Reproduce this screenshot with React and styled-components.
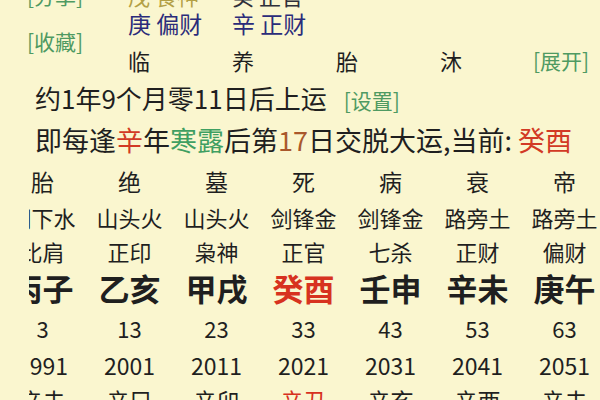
import React from 'react';
import styled, { createGlobalStyle } from 'styled-components';

const GlobalStyle = createGlobalStyle`
  html, body {
    margin: 0;
    padding: 0;
    background: #faf6cf;
  }
  body {
    font-family: "Noto Sans CJK SC", "Noto Sans", sans-serif;
    color: #1f1f1f;
  }
`;

const Page = styled.div`
  width: 600px;
  height: 400px;
  overflow: hidden;
  background: #faf6cf;
`;

const Header = styled.div`
  display: grid;
  grid-template-columns: 101px 104px 104px 104px 93px 1fr;
  grid-template-rows: 28px 28px 46px;
  margin-top: -19px;
  padding-left: 27px;
  align-items: center;
`;

const Cell = styled.div`
  font-size: ${({ size }) => size || 22}px;
  line-height: 1;
  white-space: nowrap;
  color: ${({ color }) => color || '#1f1f1f'};
  grid-column: ${({ col }) => col};
  grid-row: ${({ row }) => row};
`;

const Link = styled(Cell)`
  color: #4f9a62;
  font-size: 21px;
`;

const SideLink = styled(Link)`
  align-self: start;
  margin-top: 22px;
`;

const Line = styled.div`
  height: 30px;
  margin-top: ${({ top }) => top || 0}px;
  padding-left: 35px;
  display: flex;
  align-items: baseline;
  font-size: ${({ size }) => size || 26}px;
  line-height: 30px;
  white-space: nowrap;
`;

const Inline = styled.span`
  color: ${({ color }) => color};
`;

const Setting = styled.span`
  color: #4f9a62;
  font-size: 21px;
  margin-left: 17px;
`;

const TableClip = styled.div`
  margin-top: 9px;
  margin-left: 29px;
  overflow: hidden;
`;

const Table = styled.div`
  margin-left: -30px;
  width: 609px;
`;

const Row = styled.div`
  display: grid;
  grid-template-columns: repeat(7, 87px);
  height: ${({ h }) => h}px;
  align-items: center;
  justify-items: center;
  font-size: ${({ size }) => size}px;
  font-weight: ${({ bold }) => (bold ? 700 : 400)};
  line-height: 1;
  white-space: nowrap;
`;

const Item = styled.span`
  color: ${({ red }) => (red ? '#d7321f' : '#1f1f1f')};
`;

const RED = '#d23a25';
const GREEN = '#3f9f62';
const BROWN = '#a9582c';

const rows = [
  { h: 34, size: 23, items: ['胎', '绝', '墓', '死', '病', '衰', '帝'] },
  { h: 37, size: 22, items: ['涧下水', '山头火', '山头火', '剑锋金', '剑锋金', '路旁土', '路旁土'] },
  { h: 31, size: 22, items: ['比肩', '正印', '枭神', '正官', '七杀', '正财', '偏财'] },
  { h: 42, size: 31, bold: true, items: ['丙子', '乙亥', '甲戌', '癸酉', '壬申', '辛未', '庚午'] },
  { h: 40, size: 22, items: ['3', '13', '23', '33', '43', '53', '63'] },
  { h: 34, size: 23, items: ['1991', '2001', '2011', '2021', '2031', '2041', '2051'] },
  { h: 36, size: 23, items: ['辛未', '辛巳', '辛卯', '辛丑', '辛亥', '辛酉', '辛未'] },
];

const App = () => (
  <>
    <GlobalStyle />
    <Page>
      <Header>
        <Link col={1} row={1}>[分享]</Link>
        <Cell col={2} row={1} color="#b3a046">戊 食神</Cell>
        <Cell col={3} row={1} color="#2f2f3a">癸 正官</Cell>

        <Cell col={2} row={2} size={23} color="#2b2c7a">庚 偏财</Cell>
        <Cell col={3} row={2} size={23} color="#2b2c7a">辛 正财</Cell>
        <SideLink col={1} row="2 / span 2">[收藏]</SideLink>

        <Cell col={2} row={3}>临</Cell>
        <Cell col={3} row={3}>养</Cell>
        <Cell col={4} row={3}>胎</Cell>
        <Cell col={5} row={3}>沐</Cell>
        <Link col={6} row={3}>[展开]</Link>
      </Header>

      <Line>
        约1年9个月零11日后上运
        <Setting>[设置]</Setting>
      </Line>
      <Line top={12} size={27}>
        即每逢<Inline color={RED}>辛</Inline>年<Inline color={GREEN}>寒露</Inline>后第
        <Inline color={BROWN}>17</Inline>日交脱大运,当前:&nbsp;<Inline color={RED}>癸酉</Inline>
      </Line>

      <TableClip>
        <Table>
          {rows.map((r, i) => (
            <Row key={i} h={r.h} size={r.size} bold={r.bold}>
              {r.items.map((t, j) => (
                <Item key={j} red={j === 3 && (i === 3 || i === 6)}>{t}</Item>
              ))}
            </Row>
          ))}
        </Table>
      </TableClip>
    </Page>
  </>
);

export default App;
